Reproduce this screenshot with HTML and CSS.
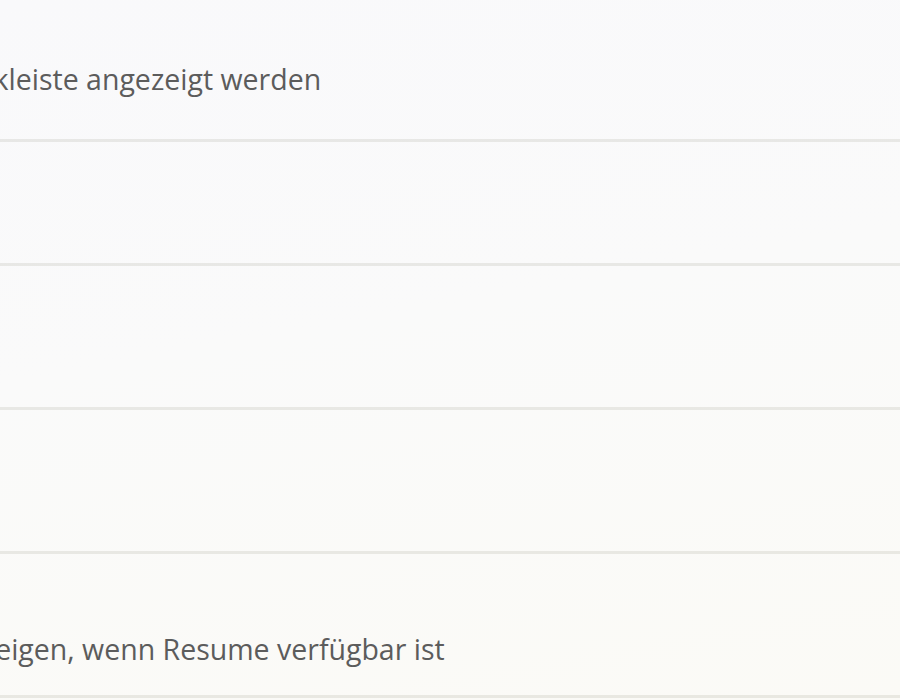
FILE: index.html
```html
<!DOCTYPE html>
<html lang="de">

<head>
  <meta charset="UTF-8">
  <meta name="viewport" content="width=device-width, initial-scale=1.0">
  <title>Einstellungen</title>
  <link rel="stylesheet" href="styles.css">
</head>

<body>
  <div class="settings">
    <div class="row row-first">
      <span class="desc desc-first">Symbole, die in der Taskleiste angezeigt werden</span>
    </div>
    <div class="row row-short"></div>
    <div class="row"></div>
    <div class="row"></div>
    <div class="row row-last">
      <span class="desc desc-last">Benachrichtigung anzeigen, wenn Resume verfügbar ist</span>
    </div>
    <div class="row row-rest"></div>
  </div>
</body>

</html>
```

FILE: styles.css
```css
body {
  margin: 0;
  height: 700px;
  overflow: hidden;
  background: linear-gradient(170deg, #f9f9fb 0%, #fafafa 45%, #fbfaf6 100%);
  font-family: "Open Sans", "Noto Sans", sans-serif;
}

.settings {
  display: flex;
  flex-direction: column;
}

.row {
  height: 141px;
  display: flex;
  align-items: flex-start;
  border-bottom: 3px solid rgba(60, 50, 20, 0.09);
}

.row-first {
  height: 139px;
}

.row-short {
  height: 121px;
}

.row-rest {
  height: 2px;
  border-bottom: none;
}

.desc {
  font-size: 28.5px;
  line-height: 38px;
  color: #5c5c5c;
  white-space: nowrap;
}

.desc-first {
  margin-top: 60px;
  margin-left: -313px;
}

.desc-last {
  margin-top: 76px;
  margin-left: -291px;
}
```
